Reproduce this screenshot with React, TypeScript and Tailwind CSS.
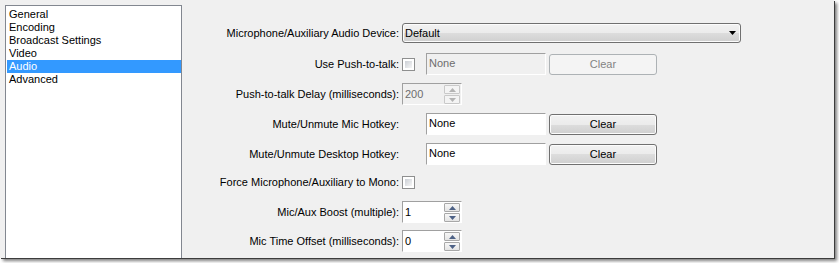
import React from "react";

const pages = ["General", "Encoding", "Broadcast Settings", "Video", "Audio", "Advanced"];

const Checkbox = () => (
  <div className="w-[13px] h-[13px] border border-[#8e8f8f] bg-white p-[2px]">
    <div className="w-full h-full bg-gradient-to-br from-[#cbcfd5] to-[#f6f6f6]" />
  </div>
);

const HotkeyBox = ({ disabled }: { disabled?: boolean }) => (
  <div
    className={`w-[120px] h-[22px] border-t border-l border-t-[#a0a0a0] border-l-[#a0a0a0] border-r border-b border-r-white border-b-white pl-[2px] pt-[3px] leading-[13px] ${
      disabled ? "bg-[#f0f0f0] text-[#6d6d6d]" : "bg-white text-black"
    }`}
  >
    None
  </div>
);

const ClearButton = ({ disabled }: { disabled?: boolean }) =>
  disabled ? (
    <div className="ml-[3px] w-[108px] h-[21px] rounded-[3px] border border-[#adb2b5] bg-[#f4f4f4] text-[#838383] flex items-center justify-center">
      Clear
    </div>
  ) : (
    <div className="ml-[3px] w-[108px] h-[21px] rounded-[3px] border border-[#707070] bg-[linear-gradient(#f2f2f2_0%,#ebebeb_50%,#dddddd_50%,#cfcfcf_100%)] text-black flex items-center justify-center shadow-[inset_0_0_0_1px_#fcfcfc]">
      Clear
    </div>
  );

const SpinButton = ({ up, disabled }: { up?: boolean; disabled?: boolean }) => (
  <div
    className={`h-[10px] w-[16px] border rounded-[1px] flex items-center justify-center ${
      disabled ? "border-[#c9c9c9] bg-[#f4f4f4]" : "border-[#a8a8a8] bg-[linear-gradient(#f7f7f7,#e4e4e4)]"
    }`}
  >
    <svg width="7" height="4" viewBox="0 0 7 4">
      <path
        d={up ? "M3.5 0 L7 4 L0 4 Z" : "M0 0 L7 0 L3.5 4 Z"}
        fill={disabled ? "#b4b4b4" : "#4d6185"}
      />
    </svg>
  </div>
);

const SpinBox = ({ value, disabled }: { value: string; disabled?: boolean }) => (
  <div
    className={`flex w-[60px] h-[22px] border-t border-l border-t-[#a0a0a0] border-l-[#a0a0a0] border-r border-b border-r-white border-b-white ${
      disabled ? "bg-[#f0f0f0] text-[#6d6d6d]" : "bg-white text-black"
    }`}
  >
    <span className="flex-1 pl-[2px] pt-[4px] leading-[13px]">{value}</span>
    <div className="flex flex-col gap-[1px] mt-[1px] mr-[1px]">
      <SpinButton up disabled={disabled} />
      <SpinButton disabled={disabled} />
    </div>
  </div>
);

const Row = ({
  label,
  className,
  children,
}: {
  label: string;
  className: string;
  children: React.ReactNode;
}) => (
  <div className={`flex items-center ${className}`}>
    <span className="w-[217px] text-right whitespace-nowrap text-black">{label}</span>
    <div className="ml-[3px] flex items-center">{children}</div>
  </div>
);

export default function App() {
  return (
    <div className="min-h-screen bg-white">
      <div
        className="w-[834px] h-[258px] bg-[#f0f0f0] overflow-hidden flex shadow-[1px_1px_0_#3c3c3c,3px_3px_3px_rgba(0,0,0,0.5)] text-[11px] leading-[13px]"
        style={{ fontFamily: '"Liberation Sans", Arial, sans-serif' }}
      >
        <div className="mt-[5px] ml-[5px] w-[177px] h-[270px] shrink-0 border border-[#828790] bg-white pt-[2px] pl-[1px]">
          {pages.map((p) => (
            <div
              key={p}
              className={`h-[13px] pl-[2px] leading-[13px] ${p === "Audio" ? "bg-[#3399ff] text-white" : "text-black"}`}
            >
              {p}
            </div>
          ))}
        </div>

        <div className="flex flex-col">
          <Row label="Microphone/Auxiliary Audio Device:" className="mt-[23px] h-[20px]">
            <div className="w-[339px] h-[20px] rounded-[3px] border border-[#707070] bg-[linear-gradient(#f2f2f2_0%,#ebebeb_50%,#dddddd_50%,#cfcfcf_100%)] flex items-center justify-between pl-[2px] pr-[4px] shadow-[inset_0_0_0_1px_#fcfcfc]">
              <span>Default</span>
              <svg width="7" height="4" viewBox="0 0 7 4">
                <path d="M0 0 L7 0 L3.5 4 Z" fill="#000" />
              </svg>
            </div>
          </Row>

          <Row label="Use Push-to-talk:" className="mt-[10px] h-[22px]">
            <Checkbox />
            <div className="ml-[11px]">
              <HotkeyBox disabled />
            </div>
            <ClearButton disabled />
          </Row>

          <Row label="Push-to-talk Delay (milliseconds):" className="mt-[8px] h-[22px]">
            <SpinBox value="200" disabled />
          </Row>

          <Row label="Mute/Unmute Mic Hotkey:" className="mt-[8px] h-[22px]">
            <div className="ml-[24px]">
              <HotkeyBox />
            </div>
            <ClearButton />
          </Row>

          <Row label="Mute/Unmute Desktop Hotkey:" className="mt-[8px] h-[22px]">
            <div className="ml-[24px]">
              <HotkeyBox />
            </div>
            <ClearButton />
          </Row>

          <Row label="Force Microphone/Auxiliary to Mono:" className="mt-[6px] h-[22px]">
            <Checkbox />
          </Row>

          <Row label="Mic/Aux Boost (multiple):" className="mt-[8px] h-[22px]">
            <SpinBox value="1" />
          </Row>

          <Row label="Mic Time Offset (milliseconds):" className="mt-[7px] h-[22px]">
            <SpinBox value="0" />
          </Row>
        </div>
      </div>
    </div>
  );
}
